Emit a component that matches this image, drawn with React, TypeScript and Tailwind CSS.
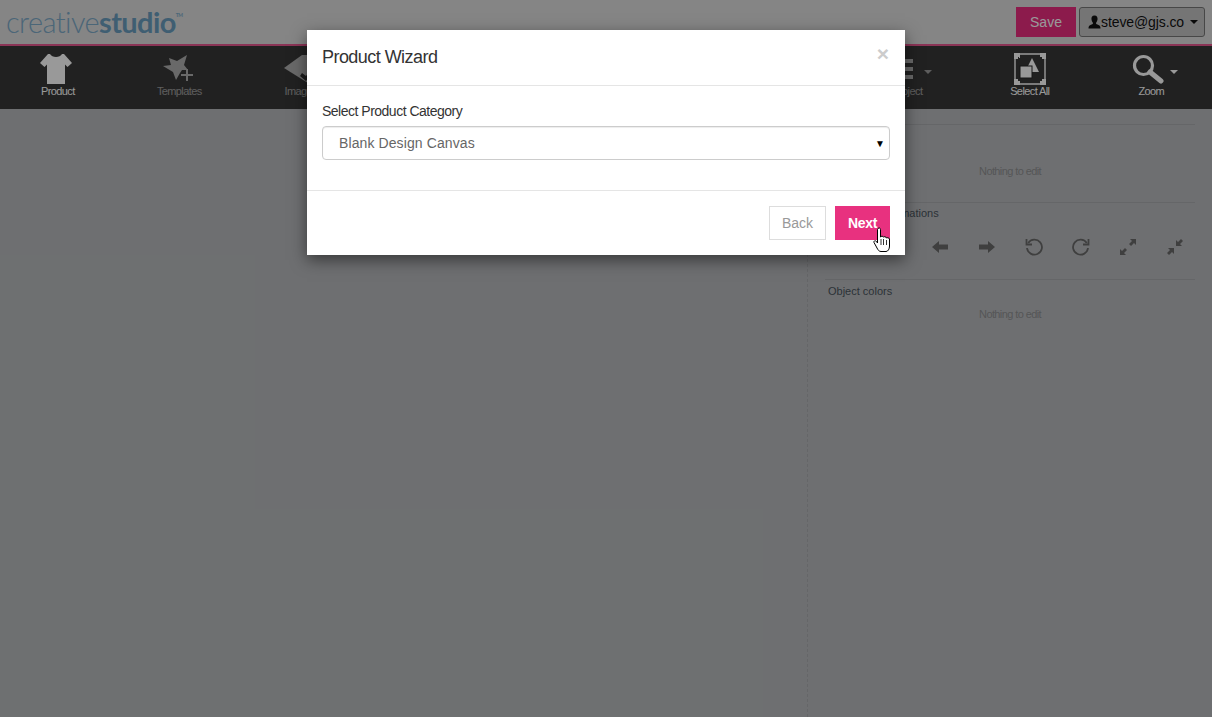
const font = "font-['Liberation_Sans',Arial,sans-serif]";

function Shirt() {
  return (
    <svg width="34" height="32" viewBox="0 0 34 32" className="fill-white mr-[4px]">
      <path d="M11 1 C13 5 21 5 23 1 L25 1 L33 10 L28.5 14 L26 11.5 L26 31 L8 31 L8 11.5 L5.5 14 L1 10 L9 1 Z" />
    </svg>
  );
}

function StarPlus() {
  return (
    <svg width="32" height="30" viewBox="0 0 32 30" className="fill-white opacity-60">
      <path d="M6 4 L14 7 L24 1 L21 11 L25 16 L19 16 L17 19 L13 26 L10 18 L0 12 L8 11 Z" />
      <path d="M23 15 h2 v5 h5 v2 h-5 v5 h-2 v-5 h-5 v-2 h5 Z" />
    </svg>
  );
}

function Tag() {
  return (
    <svg width="38" height="30" viewBox="0 0 38 30" className="fill-white opacity-60 -mr-[4px]">
      <path d="M0 14 L18 1 L38 1 L38 14 L24 29 Z" />
      <path d="M16 22 L22 27 L32 14 L30 12 L22 22 L18 19 Z" className="fill-[#262626]" />
    </svg>
  );
}

function Lines() {
  return (
    <svg width="14" height="24" viewBox="0 0 14 24" className="fill-white opacity-60">
      <rect x="0" y="2" width="14" height="4" />
      <rect x="0" y="10" width="14" height="4" />
      <rect x="0" y="18" width="14" height="4" />
    </svg>
  );
}

function SelectAll() {
  return (
    <svg width="32" height="32" viewBox="0 0 32 32" className="text-white">
      <path d="M1 1 H31 V31 H1 Z" fill="none" stroke="currentColor" strokeWidth="1.4" />
      <path d="M0 0 h6 v5 h-1 v-1 h-1 v2 h-4 Z M26 0 h6 v6 h-4 v-2 h-2 Z M0 26 h4 v2 h2 v4 h-6 Z M28 26 h4 v6 h-6 v-4 h2 Z" fill="currentColor" />
      <path d="M18 5 L25 19 L11 19 Z" fill="currentColor" />
      <rect x="6" y="13" width="12" height="12" fill="currentColor" stroke="#262626" strokeWidth="1" />
    </svg>
  );
}

function Zoom() {
  return (
    <svg width="32" height="30" viewBox="0 0 32 30" className="text-white">
      <circle cx="11.5" cy="11.5" r="9" fill="none" stroke="currentColor" strokeWidth="3.2" />
      <path d="M18 18 L29 27" stroke="currentColor" strokeWidth="5" strokeLinecap="round" />
    </svg>
  );
}

function Caret({ dim }: { dim?: boolean }) {
  return (
    <span className={`mt-[6px] border-x-[4px] border-t-[4px] border-x-transparent border-t-white ${dim ? "opacity-50" : ""}`} />
  );
}

function ToolItem({ label, dim, children }: { label?: string; dim?: boolean; children?: React.ReactNode }) {
  return (
    <div className="flex-1 flex flex-col items-center pt-[7px]">
      <div className="h-[32px] flex items-center">{children}</div>
      {label && (
        <span className={`text-[11px] leading-[13px] tracking-[-0.6px] text-white ${dim ? "opacity-50" : ""}`}>
          {label}
        </span>
      )}
    </div>
  );
}

function Transform({ d }: { d: string }) {
  return (
    <div className="w-[47px] flex justify-center">
      <svg width="18" height="18" viewBox="0 0 18 18" className="fill-[#6a6a6a]">
        <path d={d} />
      </svg>
    </div>
  );
}

function TransformIcons() {
  return (
    <div className="mt-[18px] -mr-[3px] flex justify-end">
      <Transform d="M1 9 L8 3 V6.5 H17 V11.5 H8 V15 Z" />
      <Transform d="M17 9 L10 3 V6.5 H1 V11.5 H10 V15 Z" />
      <div className="w-[47px] flex justify-center">
        <svg width="18" height="18" viewBox="0 0 18 18" fill="none" stroke="#6a6a6a" strokeWidth="1.8">
          <path d="M3.2 5 A7.5 7.5 0 1 1 2 10" />
          <path d="M1.5 1 V6.5 H7" />
        </svg>
      </div>
      <div className="w-[47px] flex justify-center">
        <svg width="18" height="18" viewBox="0 0 18 18" fill="none" stroke="#6a6a6a" strokeWidth="1.8">
          <path d="M14.8 5 A7.5 7.5 0 1 0 16 10" />
          <path d="M16.5 1 V6.5 H11" />
        </svg>
      </div>
      <Transform d="M11 1 H17 V7 L15 5 L12 8 L10 6 L13 3 Z M7 17 H1 V11 L3 13 L6 10 L8 12 L5 15 Z" />
      <Transform d="M10 8 V2 L12 4 L15 1 L17 3 L14 6 L16 8 Z M8 10 V16 L6 14 L3 17 L1 15 L4 12 L2 10 Z" />
    </div>
  );
}

function Section({ className, children }: { className: string; children: React.ReactNode }) {
  return <div className={`border-t border-[#a9abae] ${className}`}>{children}</div>;
}

function HandCursor() {
  return (
    <svg width="18" height="26" viewBox="0 0 18 26" className="absolute left-[566px] top-[197px]">
      <path
        d="M5 1.5 C6 0.5 7.5 1 7.5 2.5 V10 C8 9 10 9 10.5 10 C11 9.5 13 9.5 13.5 11 C14 10.5 16 10.5 16.5 12 V19 C16.5 22 15 24.5 13 24.5 H8 C6 24.5 5 23 4 21 L1 15.5 C0.5 14 2 13 3.5 14.5 L4.5 16 V2.5 Z"
        fill="#fff"
        stroke="#000"
        strokeWidth="1"
      />
      <path d="M8 12 V18 M10.5 12 V18 M13.5 13 V18" stroke="#000" strokeWidth="0.8" />
    </svg>
  );
}

export default function App() {
  return (
    <div className={`relative h-[717px] w-full overflow-hidden bg-[#b8babd] ${font}`}>
      <div className="flex h-[44px] items-start justify-between bg-[#dedede]">
        <div className="ml-[6px] mt-[4px] flex items-start text-[#7daac8] font-['Lato',sans-serif] text-[29px] leading-[36px] tracking-[-0.6px]">
          <span className="font-light">creative</span>
          <span className="font-bold text-[#6a9dbe]">studio</span>
          <span className="mt-[7px] text-[5px] leading-[8px] font-bold">TM</span>
        </div>
        <div className="flex mt-[7px] mr-[7px] gap-[3px]">
          <div className="w-[60px] h-[30px] bg-[#e92d7f] text-white text-[14px] flex items-center justify-center">Save</div>
          <div className="h-[30px] w-[126px] rounded-[3px] border border-[#777] bg-[#c4c4c4] text-[#111] text-[14px] flex items-center pl-[8px]">
            <svg width="13" height="14" viewBox="0 0 13 14" className="fill-[#111]">
              <path d="M6.5 0.5 C9 0.5 9.8 2.5 9.5 4.5 C9.3 6 8.6 7 8 8 C8 9 9 9.5 10.5 10 C12 10.5 12.5 11.5 12.5 13.5 H0.5 C0.5 11.5 1 10.5 2.5 10 C4 9.5 5 9 5 8 C4.4 7 3.7 6 3.5 4.5 C3.2 2.5 4 0.5 6.5 0.5 Z" />
            </svg>
            <span className="tracking-[-0.1px]">steve@gjs.co</span>
            <span className="ml-[6px] border-x-[4px] border-t-[4px] border-x-transparent border-t-[#111]" />
          </div>
        </div>
      </div>
      <div className="h-[2px] bg-[#e8588f]" />
      <div className="-ml-[3px] flex h-[63px] bg-[#383838]">
        <ToolItem label="Product"><Shirt /></ToolItem>
        <ToolItem label="Templates" dim><StarPlus /></ToolItem>
        <ToolItem label="Images" dim><Tag /></ToolItem>
        <ToolItem />
        <ToolItem />
        <ToolItem />
        <ToolItem />
        <ToolItem label="Object" dim>
          <span className="w-[14px]" />
          <Lines />
          <span className="w-[11px]" />
          <Caret dim />
        </ToolItem>
        <ToolItem label="Select All"><SelectAll /></ToolItem>
        <ToolItem label="Zoom">
          <span className="w-[8px]" />
          <Zoom />
          <span className="w-[6px]" />
          <Caret />
        </ToolItem>
      </div>
      <div className="flex h-[608px]">
        <div className="w-[807px] shrink-0" />
        <div className="flex-1 min-w-0 border-l border-dashed border-[#a9abae] px-[17px] pt-[15px]">
          <Section className="h-[78px] text-center pt-[40px]">
            <span className="block text-[11px] leading-[13px] tracking-[-0.6px] text-[#8e8f91]">Nothing to edit</span>
          </Section>
          <Section className="h-[77px] pt-[4px]">
            <div className="pl-[3px] text-[11px] leading-[13px] text-[#4a545c]">Object transformations</div>
            <TransformIcons />
          </Section>
          <Section className="pt-[5px]">
            <div className="pl-[3px] text-[11px] leading-[13px] text-[#4a545c]">Object colors</div>
            <div className="mt-[10px] text-center text-[11px] leading-[13px] tracking-[-0.6px] text-[#8e8f91]">Nothing to edit</div>
          </Section>
        </div>
      </div>

      <div className="absolute inset-0 bg-black/40 flex justify-center items-start pt-[30px]">
        <div className="relative w-[598px] h-[225px] bg-white shadow-[0_5px_15px_rgba(0,0,0,0.5)]">
          <div className="h-[56px] border-b border-[#e5e5e5] flex items-start justify-between px-[15px] pt-[16px]">
            <h4 className="text-[18px] leading-[22px] tracking-[-0.55px] text-[#333]">Product Wizard</h4>
            <span className="mr-[1px] mt-[-3px] text-[21px] leading-[21px] font-bold text-[#ccc]">×</span>
          </div>
          <div className="h-[105px] border-b border-[#e5e5e5] px-[15px] pt-[15px]">
            <div className="text-[14px] leading-[20px] tracking-[-0.5px] text-[#333]">Select Product Category</div>
            <div className="mt-[5px] h-[34px] rounded-[4px] border border-[#ccc] flex items-center justify-between pl-[16px] pr-[4px] shadow-[inset_0_1px_1px_rgba(0,0,0,0.075)]">
              <span className="text-[14px] text-[#666] tracking-[0.1px]">Blank Design Canvas</span>
              <span className="text-[10px] text-black">▼</span>
            </div>
          </div>
          <div className="flex justify-end gap-[9px] px-[15px] pt-[15px]">
            <div className="w-[57px] h-[34px] border border-[#ddd] text-[14px] text-[#999] flex items-center justify-center">Back</div>
            <div className="w-[55px] h-[34px] bg-[#e8317f] text-[14px] font-bold text-white flex items-center justify-center tracking-[-0.3px]">Next</div>
          </div>
          <HandCursor />
        </div>
      </div>
    </div>
  );
}
